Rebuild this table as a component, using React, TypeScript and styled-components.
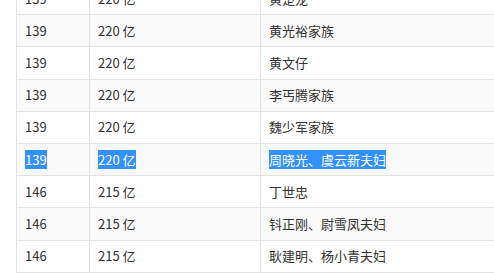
import React from 'react';
import styled, {createGlobalStyle} from 'styled-components';

interface Entry {
  rank: number;
  wealth: string;
  name: string;
  selected?: boolean;
}

const ROWS: Entry[] = [
  {rank: 139, wealth: '220 亿', name: '黄楚龙'},
  {rank: 139, wealth: '220 亿', name: '黄光裕家族'},
  {rank: 139, wealth: '220 亿', name: '黄文仔'},
  {rank: 139, wealth: '220 亿', name: '李丐腾家族'},
  {rank: 139, wealth: '220 亿', name: '魏少军家族'},
  {rank: 139, wealth: '220 亿', name: '周晓光、虞云新夫妇', selected: true},
  {rank: 146, wealth: '215 亿', name: '丁世忠'},
  {rank: 146, wealth: '215 亿', name: '钭正刚、尉雪凤夫妇'},
  {rank: 146, wealth: '215 亿', name: '耿建明、杨小青夫妇'},
];

function App () {
  return(
    <>
      <GlobalStyle />
      <Page>
        <Table>
          <tbody>
            {ROWS.map((row, i) => (
              <Row key={i} $striped={i % 2 === 1}>
                <RankCell>{row.selected ? <Picked>{row.rank}</Picked> : row.rank}</RankCell>
                <WealthCell>{row.selected ? <Picked>{row.wealth}</Picked> : row.wealth}</WealthCell>
                <Cell>{row.selected ? <Picked>{row.name}</Picked> : row.name}</Cell>
              </Row>
            ))}
          </tbody>
        </Table>
      </Page>
    </>
  );
}

export default App;

const GlobalStyle = createGlobalStyle`
  body {
    margin : 0;
    background : #fff;
    overflow : hidden;
    font-family : "Noto Sans CJK SC", "Noto Sans", sans-serif;
  }
`;

const Page = styled.div`
  width : 494px;
  height : 273px;
  overflow : hidden;
  padding-left : 16px;
  box-sizing : border-box;
`;

const Table = styled.table`
  margin-top : -18px;
  width : 540px;
  border-collapse : collapse;
  font-size : 13px;
  color : #333;
`;

const Row = styled.tr<{$striped: boolean}>`
  height : 32.2px;
  background : ${p => p.$striped ? '#f9f9f9' : '#fff'};
`;

const Cell = styled.td`
  border : 1px solid #e2e2e2;
  padding : 0 8px;
  line-height : 20px;
  vertical-align : middle;
  white-space : nowrap;
`;

const RankCell = styled(Cell)`
  width : 56px;
`;

const WealthCell = styled(Cell)`
  width : 154px;
`;

const Picked = styled.span`
  background : #3390ff;
  color : #fff;
`;
